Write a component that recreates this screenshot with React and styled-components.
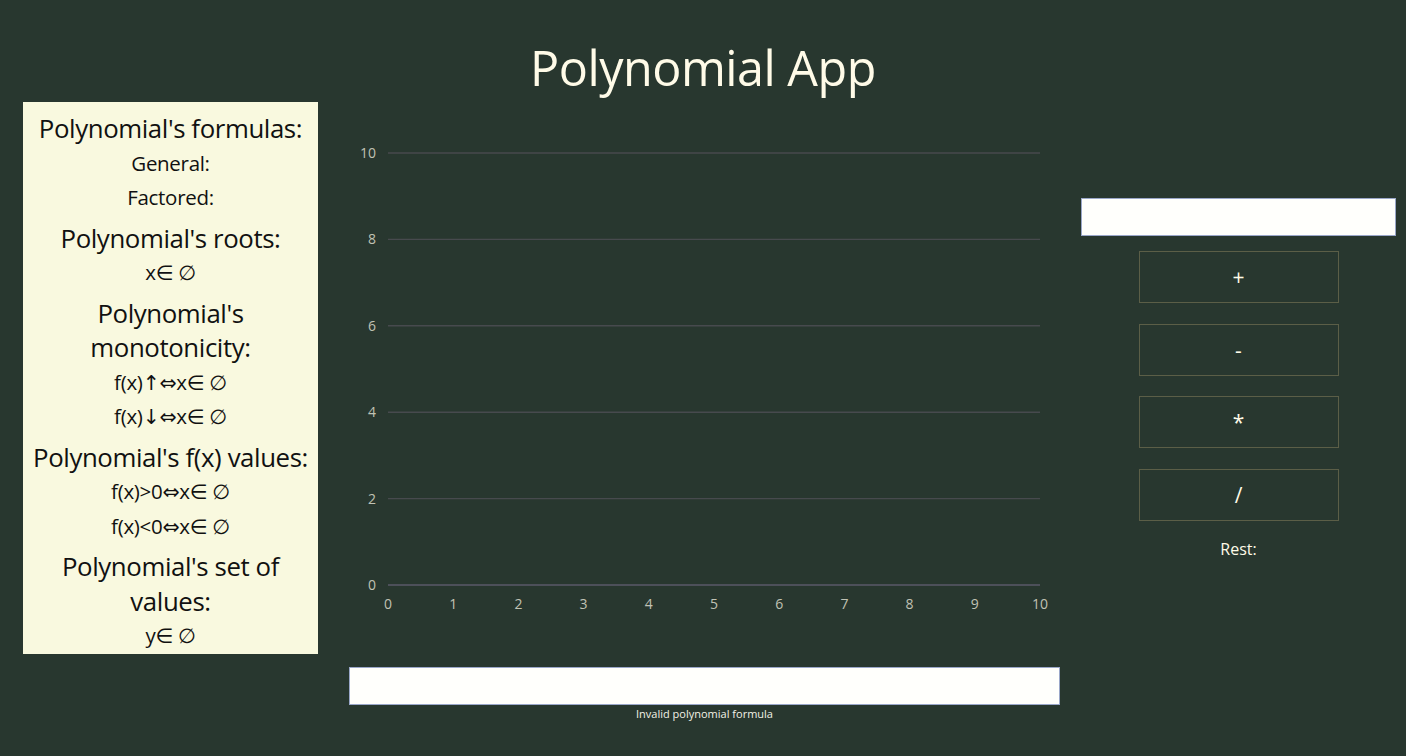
import React, { useState } from 'react';
import styled, { createGlobalStyle } from 'styled-components';

const GlobalStyle = createGlobalStyle`
  body {
    margin: 0;
    background: #28372f;
    font-family: 'Open Sans', 'Noto Sans', sans-serif;
  }
`;

const Page = styled.div`
  width: 1406px;
  height: 756px;
  background: #28372f;
  color: #fffbe6;
  overflow: hidden;
`;

const Title = styled.h1`
  margin: 0;
  padding-top: 36px;
  height: 102px;
  box-sizing: border-box;
  text-align: center;
  font-size: 48.5px;
  font-weight: 400;
  line-height: 62px;
  letter-spacing: -0.5px;
  color: #fffbe8;
`;

const Main = styled.div`
  display: flex;
  align-items: flex-start;
  padding-left: 23px;
`;

const InfoPanel = styled.div`
  width: 295px;
  box-sizing: border-box;
  background: #f9f9df;
  color: #111;
  text-align: center;
  padding: 9px 0 1px;
  font-family: 'Open Sans', 'DejaVu Sans', sans-serif;
`;

const Heading = styled.div`
  font-size: 25.8px;
  line-height: 34.5px;
  letter-spacing: -0.4px;
  margin-top: ${(p) => (p.first ? 0 : '6px')};
`;

const Line = styled.div`
  font-size: 20.5px;
  line-height: 34.5px;
  letter-spacing: -0.3px;
`;

const Center = styled.div`
  width: 711px;
  margin-left: 31px;
  margin-top: 38px;
  display: flex;
  flex-direction: column;
  align-items: center;
`;

const ChartBox = styled.div`
  width: 711px;
  height: 527px;
`;

const FormulaInput = styled.input`
  width: 711px;
  height: 38px;
  box-sizing: border-box;
  border: 1px solid #9aa7c9;
  background: #fffffc;
  font-size: 16px;
  padding: 0 8px;
`;

const Hint = styled.div`
  font-size: 11px;
  color: #f2f2e6;
  margin-top: 1px;
`;

const Side = styled.div`
  width: 315px;
  margin-left: 21px;
  margin-top: 96px;
  display: flex;
  flex-direction: column;
  align-items: center;
`;

const SideInput = styled(FormulaInput)`
  width: 315px;
  margin-bottom: 15px;
`;

const OpButton = styled.button`
  width: 200px;
  height: 52px;
  margin-bottom: 20.5px;
  background: transparent;
  border: 1px solid #5b5e47;
  color: #fffbe8;
  font-size: 21px;
  font-family: 'Open Sans', sans-serif;
  cursor: pointer;
`;

const Rest = styled.div`
  font-size: 16px;
  color: #fffbe8;
  margin-top: -3px;
`;

function Chart() {
  const left = 39;
  const right = 691;
  const top = 13;
  const bottom = 445;
  const ys = [10, 8, 6, 4, 2, 0];
  const xs = [0, 1, 2, 3, 4, 5, 6, 7, 8, 9, 10];
  const yPos = (v) => bottom - ((bottom - top) * v) / 10;
  const xPos = (v) => left + ((right - left) * v) / 10;
  return (
    <svg width="711" height="527">
      {ys.map((v) => (
        <g key={v}>
          <line
            x1={left}
            x2={right}
            y1={yPos(v)}
            y2={yPos(v)}
            stroke={v === 0 ? '#5a5a6a' : '#474a4e'}
            strokeWidth="1.4"
          />
          <text
            x={left - 12}
            y={yPos(v) + 5}
            textAnchor="end"
            fontSize="14"
            fill="#c0c2b4"
            fontFamily="'Open Sans', sans-serif"
          >
            {v}
          </text>
        </g>
      ))}
      {xs.map((v) => (
        <text
          key={v}
          x={xPos(v)}
          y={bottom + 24}
          textAnchor="middle"
          fontSize="14"
          fill="#c0c2b4"
          fontFamily="'Open Sans', sans-serif"
        >
          {v}
        </text>
      ))}
    </svg>
  );
}

export default function App() {
  const [formula, setFormula] = useState('');
  const [second, setSecond] = useState('');

  return (
    <Page>
      <GlobalStyle />
      <Title>Polynomial App</Title>
      <Main>
        <InfoPanel>
          <Heading first>Polynomial's formulas:</Heading>
          <Line>General:</Line>
          <Line>Factored:</Line>
          <Heading>Polynomial's roots:</Heading>
          <Line>x∈ ∅</Line>
          <Heading>
            Polynomial's
            <br />
            monotonicity:
          </Heading>
          <Line>f(x)↑⇔x∈ ∅</Line>
          <Line>f(x)↓⇔x∈ ∅</Line>
          <Heading>Polynomial's f(x) values:</Heading>
          <Line>f(x)&gt;0⇔x∈ ∅</Line>
          <Line>f(x)&lt;0⇔x∈ ∅</Line>
          <Heading>
            Polynomial's set of
            <br />
            values:
          </Heading>
          <Line>y∈ ∅</Line>
        </InfoPanel>
        <Center>
          <ChartBox>
            <Chart />
          </ChartBox>
          <FormulaInput value={formula} onChange={(e) => setFormula(e.target.value)} />
          <Hint>Invalid polynomial formula</Hint>
        </Center>
        <Side>
          <SideInput value={second} onChange={(e) => setSecond(e.target.value)} />
          <OpButton>+</OpButton>
          <OpButton>-</OpButton>
          <OpButton>*</OpButton>
          <OpButton>/</OpButton>
          <Rest>Rest:</Rest>
        </Side>
      </Main>
    </Page>
  );
}
